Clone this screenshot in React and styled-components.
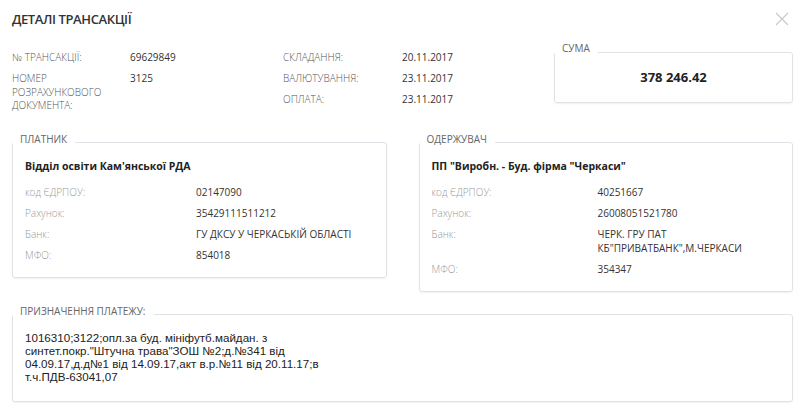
import styled, { createGlobalStyle } from 'styled-components';

const GlobalStyle = createGlobalStyle`
  html, body {
    margin: 0;
    padding: 0;
    background: #fff;
  }
  body {
    font-family: 'Open Sans', 'Noto Sans', sans-serif;
    color: #333;
  }
`;

const Page = styled.div`
  width: 800px;
  height: 406px;
  box-sizing: border-box;
  padding: 10px 7px 0 12px;
  display: flex;
  flex-direction: column;
  overflow: hidden;
`;

const Header = styled.header`
  display: flex;
  justify-content: space-between;
  align-items: flex-start;
  padding-right: 4px;
`;

const Title = styled.h1`
  margin: 0;
  font-size: 13px;
  font-weight: 600;
  line-height: 18px;
  letter-spacing: -0.4px;
  color: #333;
`;

const CloseButton = styled.button`
  display: flex;
  width: 14px;
  height: 14px;
  margin-top: 2px;
  padding: 0;
  border: 0;
  background: none;
  cursor: pointer;
`;

const TopSection = styled.section`
  display: flex;
  align-items: flex-start;
  margin-top: 14px;
`;

const InfoColumns = styled.div`
  flex: 1;
  display: flex;
  padding-top: 9px;
`;

const InfoGrid = styled.dl`
  margin: 0;
  display: grid;
  grid-template-columns: ${(p) => p.$label}px ${(p) => p.$value};
  row-gap: 7.5px;
  align-content: start;
  font-size: 10px;
  line-height: 13.5px;
`;

const InfoLabel = styled.dt`
  color: #555;
  font-weight: 300;
  text-transform: uppercase;
`;

const InfoValue = styled.dd`
  margin: 0;
  color: #333;
`;

const Panel = styled.fieldset`
  margin: 0;
  min-width: 0;
  box-sizing: border-box;
  border: 1px solid #dfe2e6;
  border-radius: 3px;
  box-shadow: 0 1px 2px rgba(0, 0, 0, 0.06);
  padding: ${(p) => p.$pad || '6px 12px 15px'};
  width: ${(p) => p.$width || 'auto'};
`;

const Legend = styled.legend`
  margin-left: -12px;
  padding: 0 8px 8px 7px;
  font-size: 10px;
  line-height: 12px;
  color: #666;
  text-transform: uppercase;
`;

const SumValue = styled.div`
  text-align: center;
  font-size: 13px;
  font-weight: 700;
  line-height: 16px;
  color: #222;
`;

const Parties = styled.div`
  display: grid;
  grid-template-columns: 1fr 1fr;
  column-gap: 32px;
  align-items: start;
  margin-top: 20px;
`;

const PartyName = styled.div`
  margin-bottom: 12px;
  font-size: 10.5px;
  font-weight: 700;
  line-height: 14px;
  color: #222;
`;

const Details = styled.dl`
  margin: 0;
  display: grid;
  grid-template-columns: ${(p) => p.$label}px 1fr;
  row-gap: 7px;
  font-size: 10px;
  line-height: 14px;
`;

const DetailLabel = styled.dt`
  color: #999;
  font-weight: 300;
`;

const DetailValue = styled.dd`
  margin: 0;
  color: #333;
`;

const PurposeText = styled.p`
  width: 320px;
  margin: 0;
  font-family: 'Liberation Sans', Arial, sans-serif;
  font-size: 11.6px;
  line-height: 13.2px;
  color: #222;
`;

const CloseIcon = () => (
  <svg width="14" height="14" viewBox="0 0 14 14">
    <path d="M1 1L13 13M13 1L1 13" stroke="#c9c9c9" strokeWidth="1.2" fill="none" />
  </svg>
);

const transaction = [
  ['№ ТРАНСАКЦІЇ:', '69629849'],
  ['НОМЕР РОЗРАХУНКОВОГО ДОКУМЕНТА:', '3125']
];

const dates = [
  ['СКЛАДАННЯ:', '20.11.2017'],
  ['ВАЛЮТУВАННЯ:', '23.11.2017'],
  ['ОПЛАТА:', '23.11.2017']
];

const parties = [
  {
    title: 'Платник',
    name: "Відділ освіти Кам'янської РДА",
    labelWidth: 171,
    rows: [
      ['код ЄДРПОУ:', '02147090'],
      ['Рахунок:', '35429111511212'],
      ['Банк:', 'ГУ ДКСУ У ЧЕРКАСЬКІЙ ОБЛАСТІ'],
      ['МФО:', '854018']
    ]
  },
  {
    title: 'Одержувач',
    name: 'ПП "Виробн. - Буд. фірма "Черкаси"',
    labelWidth: 166,
    rows: [
      ['код ЄДРПОУ:', '40251667'],
      ['Рахунок:', '26008051521780'],
      ['Банк:', 'ЧЕРК. ГРУ ПАТ КБ"ПРИВАТБАНК",М.ЧЕРКАСИ'],
      ['МФО:', '354347']
    ]
  }
];

export default function App() {
  return (
    <>
      <GlobalStyle />
      <Page>
        <Header>
          <Title>ДЕТАЛІ ТРАНСАКЦІЇ</Title>
          <CloseButton aria-label="Закрити">
            <CloseIcon />
          </CloseButton>
        </Header>

        <TopSection>
          <InfoColumns>
            <InfoGrid $label={118} $value="153px">
              {transaction.map(([label, value]) => (
                <>
                  <InfoLabel key={label}>{label}</InfoLabel>
                  <InfoValue key={label + 'v'}>{value}</InfoValue>
                </>
              ))}
            </InfoGrid>
            <InfoGrid $label={119} $value="1fr">
              {dates.map(([label, value]) => (
                <>
                  <InfoLabel key={label}>{label}</InfoLabel>
                  <InfoValue key={label + 'v'}>{value}</InfoValue>
                </>
              ))}
            </InfoGrid>
          </InfoColumns>
          <Panel $width="239px" $pad="7px 12px 17px">
            <Legend>Сума</Legend>
            <SumValue>378 246.42</SumValue>
          </Panel>
        </TopSection>

        <Parties>
          {parties.map((party) => (
            <Panel key={party.title}>
              <Legend>{party.title}</Legend>
              <PartyName>{party.name}</PartyName>
              <Details $label={party.labelWidth}>
                {party.rows.map(([label, value]) => (
                  <>
                    <DetailLabel key={label}>{label}</DetailLabel>
                    <DetailValue key={label + 'v'}>{value}</DetailValue>
                  </>
                ))}
              </Details>
            </Panel>
          ))}
        </Parties>

        <Panel style={{ marginTop: 13 }} $pad="6px 12px 18px">
          <Legend>Призначення платежу:</Legend>
          <PurposeText>
            1016310;3122;опл.за буд. мініфутб.майдан. з синтет.покр."Штучна трава"ЗОШ №2;д.№341 від
            04.09.17,д.д№1 від 14.09.17,акт в.р.№11 від 20.11.17;в т.ч.ПДВ-63041,07
          </PurposeText>
        </Panel>
      </Page>
    </>
  );
}
